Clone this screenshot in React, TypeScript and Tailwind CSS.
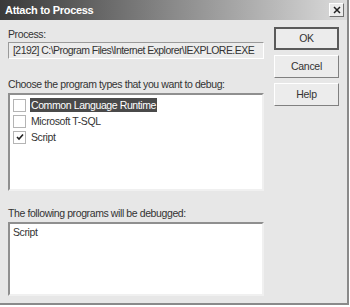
import React from 'react';

const font = { fontFamily: '"Liberation Sans", Arial, sans-serif' };

function Check({ checked }: { checked: boolean }) {
  return (
    <span className="inline-flex w-[13px] h-[13px] border border-[#b4b4b4] bg-white items-center justify-center mr-[4px] shrink-0">
      {checked && (
        <svg width="8" height="8" viewBox="0 0 8 8">
          <path d="M1 4 L3 6 L7 1.5" stroke="#222" strokeWidth="1.6" fill="none" />
        </svg>
      )}
    </span>
  );
}

function Button({ label, primary }: { label: string; primary?: boolean }) {
  return (
    <button
      className={
        'w-[65px] h-[23px] bg-[#ececec] text-[10.5px] tracking-[-0.3px] text-[#333] flex items-center justify-center ' +
        (primary
          ? 'border-2 border-[#5a5a5a]'
          : 'border border-t-white border-l-white border-r-[#808080] border-b-[#808080]')
      }
    >
      {label}
    </button>
  );
}

export default function App() {
  const items = [
    { name: 'Common Language Runtime', checked: false, selected: true },
    { name: 'Microsoft T-SQL', checked: false, selected: false },
    { name: 'Script', checked: true, selected: false },
  ];

  return (
    <div style={font} className="w-[350px] h-[307px] bg-white text-[10.5px] tracking-[-0.4px] text-[#333]">
      <div className="w-[349px] h-[305px] bg-[#e7e7e7] border-r-2 border-b-2 border-[#8a8a8a] flex flex-col">
        {/* Title bar */}
        <div className="h-[20px] flex items-center justify-between pl-[5px] pr-[3px] bg-gradient-to-r from-[#3a3a3a] via-[#8a8a8a] to-[#dcdcdc]">
          <span className="text-white font-bold text-[11px] tracking-[-0.3px]">Attach to Process</span>
          <span className="w-[15px] h-[14px] bg-[#ececec] border border-t-white border-l-white border-r-[#707070] border-b-[#707070] flex items-center justify-center">
            <svg width="8" height="8" viewBox="0 0 8 8">
              <path d="M1 1 L7 7 M7 1 L1 7" stroke="#222" strokeWidth="1.5" />
            </svg>
          </span>
        </div>

        <div className="flex flex-1 pl-[8px] pt-[7px]">
          {/* Left column */}
          <div className="w-[256px] flex flex-col">
            <div className="h-[14px] leading-[14px]">Process:</div>
            <div className="mt-[1px] h-[17px] bg-[#ececec] border border-t-[#9a9a9a] border-l-[#9a9a9a] border-r-white border-b-white flex items-center pl-[4px] whitespace-nowrap overflow-hidden tracking-[-0.55px]">
              [2192] C:\Program Files\Internet Explorer\IEXPLORE.EXE
            </div>

            <div className="mt-[18px] h-[14px] leading-[14px]">Choose the program types that you want to debug:</div>
            <div className="mt-[2px] h-[98px] bg-white border-2 border-t-[#8f8f8f] border-l-[#8f8f8f] border-r-[#f0f0f0] border-b-[#f0f0f0] pt-[2px] pl-[3px]">
              {items.map((it) => (
                <div key={it.name} className="h-[16px] flex items-center">
                  <Check checked={it.checked} />
                  <span
                    className={
                      'px-[1px] leading-[14px] ' + (it.selected ? 'bg-[#4a4a4a] text-white' : '')
                    }
                  >
                    {it.name}
                  </span>
                </div>
              ))}
            </div>

            <div className="mt-[15px] h-[14px] leading-[14px]">The following programs will be debugged:</div>
            <div className="mt-[2px] h-[74px] bg-white border-2 border-t-[#8f8f8f] border-l-[#8f8f8f] border-r-[#f0f0f0] border-b-[#f0f0f0] pl-[3px] pt-[1px]">
              Script
            </div>
          </div>

          {/* Right column */}
          <div className="ml-[10px] flex flex-col gap-[5px]">
            <Button label="OK" primary />
            <Button label="Cancel" />
            <Button label="Help" />
          </div>
        </div>
      </div>
    </div>
  );
}
